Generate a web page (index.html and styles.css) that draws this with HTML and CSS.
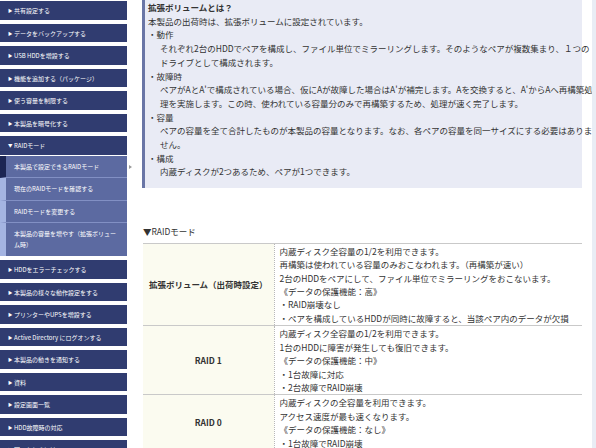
FILE: index.html
```html
<!DOCTYPE html>
<html lang="ja">
<head>
<meta charset="utf-8">
<title>RAIDモード</title>
<link rel="stylesheet" href="styles.css">
</head>
<body>
<div class="page">
  <nav class="sidebar">
    <div class="nav-item"><span class="tri">▶</span>共有設定する</div>
    <div class="nav-item"><span class="tri">▶</span>データをバックアップする</div>
    <div class="nav-item"><span class="tri">▶</span>USB HDDを増設する</div>
    <div class="nav-item"><span class="tri">▶</span>機能を追加する（パッケージ）</div>
    <div class="nav-item"><span class="tri">▶</span>使う容量を制限する</div>
    <div class="nav-item"><span class="tri">▶</span>本製品を暗号化する</div>
    <div class="nav-item open"><span class="tri">▼</span>RAIDモード</div>
    <div class="sub-list">
      <div class="sub-item active">本製品で設定できるRAIDモード<span class="pointer"></span></div>
      <div class="sub-item">現在のRAIDモードを確認する</div>
      <div class="sub-item">RAIDモードを変更する</div>
      <div class="sub-item multi">本製品の容量を増やす（拡張ボリューム時）</div>
    </div>
    <div class="nav-item"><span class="tri">▶</span>HDDをエラーチェックする</div>
    <div class="nav-item"><span class="tri">▶</span>本製品の様々な動作設定をする</div>
    <div class="nav-item"><span class="tri">▶</span>プリンターやUPSを増設する</div>
    <div class="nav-item"><span class="tri">▶</span>Active Directory にログオンする</div>
    <div class="nav-item"><span class="tri">▶</span>本製品の動きを通知する</div>
    <div class="nav-item"><span class="tri">▶</span>資料</div>
    <div class="nav-item"><span class="tri">▶</span>設定画面一覧</div>
    <div class="nav-item"><span class="tri">▶</span>HDD故障時の対応</div>
    <div class="nav-item"><span class="tri">▶</span>困ったときには</div>
  </nav>

  <main class="main">
    <section class="note">
      <p class="note-title">拡張ボリュームとは？</p>
      <p>本製品の出荷時は、拡張ボリュームに設定されています。</p>
      <p>・動作</p>
      <p class="indent">それぞれ2台のHDDでペアを構成し、ファイル単位でミラーリングします。そのようなペアが複数集まり、１つの<br>ドライブとして構成されます。</p>
      <p>・故障時</p>
      <p class="indent">ペアがAとA'で構成されている場合、仮にAが故障した場合はA'が補完します。Aを交換すると、A'からAへ再構築処<br>理を実施します。この時、使われている容量分のみで再構築するため、処理が速く完了します。</p>
      <p>・容量</p>
      <p class="indent">ペアの容量を全て合計したものが本製品の容量となります。なお、各ペアの容量を同一サイズにする必要はありま<br>せん。</p>
      <p>・構成</p>
      <p class="indent">内蔵ディスクが2つあるため、ペアが1つできます。</p>
    </section>

    <p class="caption">▼RAIDモード</p>
    <table class="raid-table">
      <tr>
        <th>拡張ボリューム（出荷時設定）</th>
        <td>内蔵ディスク全容量の1/2を利用できます。<br>再構築は使われている容量のみおこなわれます。（再構築が速い）<br>2台のHDDをペアにして、ファイル単位でミラーリングをおこないます。<br>《データの保護機能：高》<br>・RAID崩壊なし<br>・ペアを構成しているHDDが同時に故障すると、当該ペア内のデータが欠損</td>
      </tr>
      <tr>
        <th>RAID 1</th>
        <td>内蔵ディスク全容量の1/2を利用できます。<br>1台のHDDに障害が発生しても復旧できます。<br>《データの保護機能：中》<br>・1台故障に対応<br>・2台故障でRAID崩壊</td>
      </tr>
      <tr>
        <th>RAID 0</th>
        <td>内蔵ディスクの全容量を利用できます。<br>アクセス速度が最も速くなります。<br>《データの保護機能：なし》<br>・1台故障でRAID崩壊</td>
      </tr>
    </table>
  </main>

  <div class="side-strip"></div>
</div>
</body>
</html>
```

FILE: styles.css
```css
* {
  box-sizing: border-box;
}

html, body {
  margin: 0;
  padding: 0;
  background: #ffffff;
}

body {
  font-family: "Noto Sans CJK JP", "Noto Sans", sans-serif;
  color: #333333;
  overflow: hidden;
  height: 448px;
}

.page {
  display: flex;
  align-items: flex-start;
  width: 596px;
  height: 448px;
}

/* ---------- sidebar ---------- */
.sidebar {
  width: 127px;
  flex: 0 0 127px;
  padding-top: 1px;
}

.nav-item {
  height: 18.5px;
  margin-bottom: 4px;
  background: #303c70;
  color: #ffffff;
  font-size: 6px;
  line-height: 18.5px;
  padding-left: 8px;
  white-space: nowrap;
}

.nav-item.open {
  margin-bottom: 1px;
}

.tri {
  display: inline-block;
  font-size: 4.5px;
  width: 6px;
  vertical-align: 1px;
}

.sub-list {
  margin-bottom: 4px;
}

.sub-item {
  position: relative;
  background: #5c6aa1;
  border-left: 6px solid #a4b4e2;
  border-bottom: 1px solid #8290c4;
  color: #ffffff;
  font-size: 6px;
  line-height: 21.5px;
  padding: 0 9px 0 8px;
}

.sub-item.active {
  border-left-color: #1c2553;
}

.sub-item.multi {
  line-height: 11px;
  padding-top: 5px;
  padding-bottom: 5px;
  border-bottom: none;
  height: 33px;
}

.pointer {
  position: absolute;
  right: -5px;
  top: 9px;
  width: 0;
  height: 0;
  border-top: 2px solid transparent;
  border-bottom: 2px solid transparent;
  border-left: 3px solid #9a9a9a;
}

/* ---------- main ---------- */
.main {
  width: 440px;
  flex: 0 0 440px;
  margin-left: 15px;
  font-size: 8.5px;
  line-height: 13.7px;
}

.main p {
  margin: 0;
}

.note {
  background: #e9ebf5;
  border-left: 3px solid #6a76a6;
  padding: 1px 4px 9px 3px;
  white-space: nowrap;
}

.note-title {
  font-weight: bold;
}

.note .indent {
  padding-left: 12px;
}

.main .caption {
  margin: 37px 0 4px 1px;
}

.raid-table {
  width: 439px;
  margin-left: 1px;
  border-collapse: collapse;
  border-top: 1px solid #c9c9c9;
  line-height: 13.4px;
}

.raid-table tr {
  border-bottom: 1px solid #c9c9c9;
}

.raid-table th {
  width: 131px;
  background: #fbfbf0;
  border-right: 1px dotted #b8b8b8;
  font-weight: bold;
  text-align: center;
  vertical-align: middle;
  padding: 0;
}

.raid-table td {
  padding: 1px 5px 0 5px;
  vertical-align: top;
  white-space: nowrap;
}

/* ---------- right strip ---------- */
.side-strip {
  flex: 1 1 auto;
  margin-left: 10px;
  height: 448px;
  background: #e9edf5;
}
```
